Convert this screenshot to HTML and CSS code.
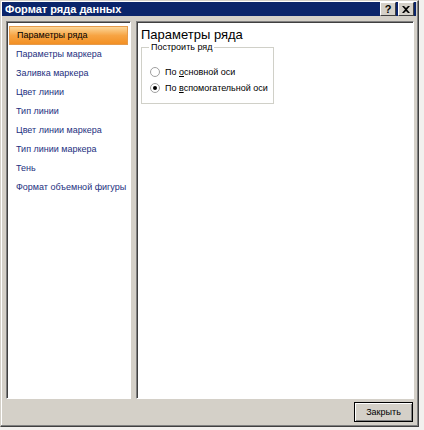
FILE: index.html
```html
<!DOCTYPE html>
<html lang="ru">

<head>
    <meta charset="UTF-8">
    <title>Формат ряда данных</title>
    <link rel="stylesheet" href="styles.css">
</head>

<body>
    <div class="dialog">
        <!-- Title bar -->
        <div class="titlebar">
            <span class="title">Формат ряда данных</span>
            <div class="title-buttons">
                <span class="tbtn">?</span>
                <span class="tbtn close">
                    <svg width="8" height="7" viewBox="0 0 8 7">
                        <path d="M0 0h2l2 2 2-2h2L5 3.5 8 7H6L4 5 2 7H0l3-3.5z" fill="#000"/>
                    </svg>
                </span>
            </div>
        </div>

        <div class="content">
            <!-- Category list -->
            <ul class="nav-list">
                <li class="selected">Параметры ряда</li>
                <li>Параметры маркера</li>
                <li>Заливка маркера</li>
                <li>Цвет линии</li>
                <li>Тип линии</li>
                <li>Цвет линии маркера</li>
                <li>Тип линии маркера</li>
                <li>Тень</li>
                <li>Формат объемной фигуры</li>
            </ul>

            <!-- Options page -->
            <div class="page">
                <h2>Параметры ряда</h2>
                <fieldset class="group">
                    <legend>Построить ряд</legend>
                    <label class="radio"><span class="dot"></span><span>По <u>о</u>сновной оси</span></label>
                    <label class="radio"><span class="dot checked"></span><span>По <u>в</u>спомогательной оси</span></label>
                </fieldset>
            </div>
        </div>

        <div class="footer">
            <button class="btn">Закрыть</button>
        </div>
    </div>
</body>

</html>
```

FILE: styles.css
```css
/* Reset */
* {
    margin: 0;
    padding: 0;
    box-sizing: border-box;
}

body {
    font-family: "Liberation Sans", Arial, sans-serif;
    font-size: 9px;
    background-color: #f2f0ee;
    width: 424px;
    height: 430px;
    overflow: hidden;
}

/* Dialog window */
.dialog {
    width: 419px;
    height: 427px;
    background-color: #d4d0c8;
    border: 1px solid #d4d0c8;
    border-right-color: #404040;
    border-bottom-color: #404040;
    box-shadow: inset -1px -1px 0 #808080, inset 1px 1px 0 #fff;
    display: flex;
    flex-direction: column;
    padding: 1px 2px 2px 1px;
}

.titlebar {
    height: 17px;
    background-color: #0a246a;
    display: flex;
    align-items: center;
    justify-content: space-between;
    padding: 0 2px 0 3px;
}

.title {
    color: #fff;
    font-weight: bold;
    font-size: 11px;
}

.title-buttons {
    display: flex;
    gap: 2px;
}

.tbtn {
    width: 16px;
    height: 14px;
    background-color: #d4d0c8;
    border: 1px solid #fff;
    border-right-color: #404040;
    border-bottom-color: #404040;
    display: flex;
    align-items: center;
    justify-content: center;
    font-weight: bold;
    font-size: 11px;
    color: #000;
}

/* Main area */
.content {
    flex: 1;
    display: flex;
    gap: 5px;
    padding: 5px 2px 0 4px;
}

.nav-list {
    list-style: none;
    width: 125px;
    height: 378px;
    background-color: #fff;
    border: 1px solid #808080;
    border-right-color: #fff;
    border-bottom-color: #fff;
    box-shadow: inset 1px 1px 0 #404040;
    padding: 4px 2px;
}

.nav-list li {
    height: 19px;
    line-height: 19px;
    padding-left: 7px;
    color: #1c2f80;
    white-space: nowrap;
}

.nav-list li.selected {
    color: #000;
    background: linear-gradient(#fbd79a, #f7a443 50%, #f39024);
    border: 1px solid #e59a4a;
    line-height: 17px;
}

.page {
    flex: 1;
    height: 378px;
    background-color: #fff;
    border: 1px solid #808080;
    border-right-color: #fff;
    border-bottom-color: #fff;
    box-shadow: inset 1px 1px 0 #404040;
    padding: 5px 4px;
}

.page h2 {
    font-weight: normal;
    font-size: 13px;
    color: #000;
    margin-bottom: 0;
}

.group {
    width: 133px;
    border: 1px solid #d0d0c8;
    padding: 11px 0 8px 8px;
    white-space: nowrap;
}

.group legend {
    padding: 0 2px;
    margin-left: -1px;
    color: #000;
}

.radio {
    display: flex;
    align-items: center;
    gap: 5px;
    height: 15px;
    color: #000;
    margin-top: 1px;
}

.dot {
    width: 10px;
    height: 10px;
    border-radius: 50%;
    border: 1px solid #a0a0a0;
    background-color: #fff;
    position: relative;
}

.dot.checked::after {
    content: "";
    position: absolute;
    left: 2px;
    top: 2px;
    width: 4px;
    height: 4px;
    border-radius: 50%;
    background-color: #000;
}

/* Footer */
.footer {
    display: flex;
    justify-content: flex-end;
    padding: 3px 3px 3px 0;
}

.btn {
    width: 59px;
    height: 20px;
    font-family: "Liberation Sans", Arial, sans-serif;
    font-size: 9px;
    background-color: #d4d0c8;
    border: 1px solid #000;
    box-shadow: inset 1px 1px 0 #fff, inset -1px -1px 0 #808080;
    color: #000;
}
```
